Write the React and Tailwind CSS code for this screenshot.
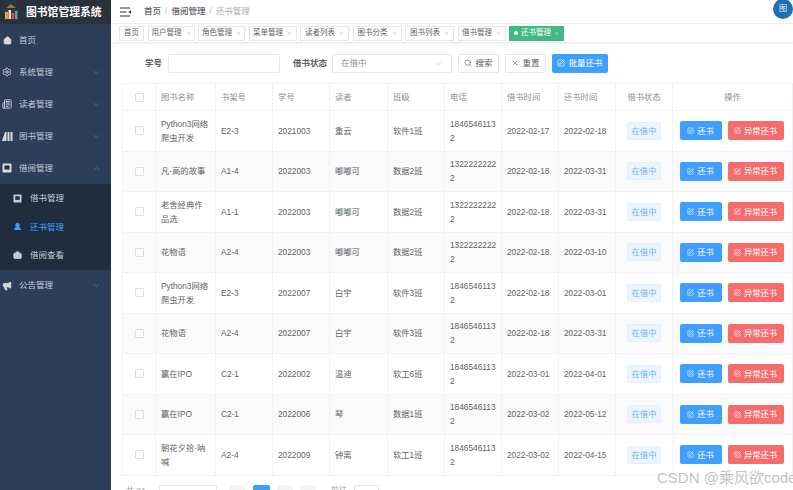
import {
  House,
  Settings,
  Newspaper,
  ChevronDown,
  ChevronUp,
  UserRound,
  Briefcase,
  Megaphone,
  Search,
  X,
  SquarePen,
} from 'lucide-react';

const tags = [
  { name: '首页', w: 'w-[25px]' },
  { name: '用户管理', close: true, w: 'w-[47px]' },
  { name: '角色管理', close: true, w: 'w-[47px]' },
  { name: '菜单管理', close: true, w: 'w-[48px]' },
  { name: '读者列表', close: true, w: 'w-[49px]' },
  { name: '图书分类', close: true, w: 'w-[49px]' },
  { name: '图书列表', close: true, w: 'w-[49px]' },
  { name: '借书管理', close: true, w: 'w-[48px]' },
];

const rows = [
  ['Python3网络爬虫开发', 'E2-3', '2021003', '重云', '软件1班', '18465461132', '2022-02-17', '2022-02-18'],
  ['凡·高的故事', 'A1-4', '2022003', '嘟嘟可', '数据2班', '13222222222', '2022-02-18', '2022-03-31'],
  ['老舍经典作品选', 'A1-1', '2022003', '嘟嘟可', '数据2班', '13222222222', '2022-02-18', '2022-03-31'],
  ['花物语', 'A2-4', '2022003', '嘟嘟可', '数据2班', '13222222222', '2022-02-18', '2022-03-10'],
  ['Python3网络爬虫开发', 'E2-3', '2022007', '白宇', '软件3班', '18465461132', '2022-02-18', '2022-03-01'],
  ['花物语', 'A2-4', '2022007', '白宇', '软件3班', '18465461132', '2022-02-18', '2022-03-31'],
  ['赢在IPO', 'C2-1', '2022002', '温迪', '软工6班', '18465461132', '2022-03-01', '2022-04-01'],
  ['赢在IPO', 'C2-1', '2022006', '琴', '数据1班', '18465461132', '2022-03-02', '2022-05-12'],
  ['朝花夕拾·呐喊', 'A2-4', '2022009', '钟离', '软工1班', '18465461132', '2022-03-02', '2022-04-15'],
];

const headers = ['图书名称', '书架号', '学号', '读者', '班级', '电话', '借书时间', '还书时间'];

function Logo() {
  return (
    <svg width="16" height="16" viewBox="0 0 16 16" className="shrink-0">
      <rect x="1" y="5" width="14" height="11" fill="#3d3a33" />
      <rect x="2" y="8" width="3" height="7" fill="#d9a441" />
      <rect x="5.5" y="6" width="2.5" height="9" fill="#e8e2cf" />
      <rect x="8.5" y="9" width="3" height="6" fill="#c9503f" />
      <rect x="12" y="7" width="2.5" height="8" fill="#4f9bb8" />
      <path d="M3 4 L8 0 L13 4 Z" fill="#8c7a55" />
    </svg>
  );
}

function CollapseIcon() {
  return (
    <svg width="11" height="10" viewBox="0 0 11 10" className="text-[#303133]">
      <path d="M0 1h10M0 5h6.5M0 9h10" stroke="currentColor" strokeWidth="1.2" fill="none" />
      <path d="M11 3.2 L8.2 5 L11 6.8 Z" fill="currentColor" />
    </svg>
  );
}

function ShelfIcon() {
  return (
    <svg width="11" height="10" viewBox="0 0 11 10">
      <path d="M0 10 L3 1 H4.5 V10 Z" fill="currentColor" />
      <rect x="5.5" y="1" width="2" height="9" fill="currentColor" />
      <rect x="8.5" y="1" width="2" height="9" fill="currentColor" />
    </svg>
  );
}

function BorrowIcon({ size = 10 }) {
  return (
    <svg width={size} height={size} viewBox="0 0 10 10">
      <rect x="0.5" y="0.5" width="9" height="9" rx="1" fill="currentColor" />
      <rect x="2.5" y="2.5" width="5" height="4" fill="#1f2d3f" />
    </svg>
  );
}

function MenuItem({ icon, label, open, arrow = true }) {
  return (
    <div className="h-8 flex items-center pr-[10px] text-[#bfcbd9]">
      <span className="w-[14px] flex justify-center text-[#d5dbe3]">{icon}</span>
      <span className="ml-[5px] flex-1">{label}</span>
      {arrow && (open ? <ChevronUp size={9} className="text-[#5f7189]" /> : <ChevronDown size={9} className="text-[#5f7189]" />)}
    </div>
  );
}

function SubItem({ icon, label, active }) {
  return (
    <div className={`h-[28.6px] flex items-center pl-[11px] ${active ? 'text-[#409eff]' : 'text-[#bfcbd9]'}`}>
      <span className="w-[12px] flex justify-center">{icon}</span>
      <span className="ml-[7px]">{label}</span>
    </div>
  );
}

function Sidebar() {
  return (
    <aside className="w-[111px] shrink-0 bg-[#2d3e58] text-[8.5px]">
      <div className="h-6 bg-[#2a303c] flex items-center pl-[3px] gap-[7px]">
        <Logo />
        <span className="text-white font-bold text-[10.8px] whitespace-nowrap">图书馆管理系统</span>
      </div>
      <MenuItem icon={<House size={9} fill="currentColor" />} label="首页" arrow={false} />
      <MenuItem icon={<Settings size={10} />} label="系统管理" />
      <MenuItem icon={<Newspaper size={10} />} label="读者管理" />
      <MenuItem icon={<ShelfIcon />} label="图书管理" />
      <MenuItem icon={<BorrowIcon />} label="借阅管理" open />
      <div className="bg-[#1f2d3f]">
        <SubItem icon={<BorrowIcon size={9} />} label="借书管理" />
        <SubItem icon={<UserRound size={9} fill="currentColor" />} label="还书管理" active />
        <SubItem icon={<Briefcase size={9} fill="currentColor" />} label="借阅查看" />
      </div>
      <MenuItem icon={<Megaphone size={10} fill="currentColor" />} label="公告管理" />
    </aside>
  );
}

function Toolbar() {
  return (
    <div className="h-[40px] flex items-center pl-[34px] text-[8.5px] text-[#606266] shrink-0">
      <span className="font-bold w-[17px] whitespace-nowrap">学号</span>
      <div className="ml-[6px] w-[112px] h-[19px] border border-[#e4e7ed] rounded-[2px]" />
      <span className="font-bold ml-[13px] w-[33px] whitespace-nowrap">借书状态</span>
      <div className="ml-[6px] w-[120px] h-[19px] border border-[#e4e7ed] rounded-[2px] flex items-center justify-between px-[8px] text-[#8a8d93]">
        在借中
        <ChevronDown size={9} className="text-[#c0c4cc]" />
      </div>
      <button className="ml-[6px] w-[41px] h-[19px] border border-[#e4e7ed] rounded-[2px] flex items-center justify-center gap-[3px]">
        <Search size={8} />
        搜索
      </button>
      <button className="ml-[6px] w-[41px] h-[19px] border border-[#e4e7ed] rounded-[2px] flex items-center justify-center gap-[3px]">
        <X size={8} />
        重置
      </button>
      <button className="ml-[6px] w-[56px] h-[19px] bg-[#409eff] text-white rounded-[2px] flex items-center justify-center gap-[3px]">
        <SquarePen size={8} />
        批量还书
      </button>
    </div>
  );
}

function DataTable() {
  return (
    <table className="ml-[11px] w-[670px] table-fixed border-collapse border border-[#f0f2f5] text-[8.3px] leading-[14px] text-[#606266]">
      <colgroup>
        <col className="w-[33px]" />
        <col className="w-[60px]" />
        <col className="w-[57px]" />
        <col className="w-[57px]" />
        <col className="w-[58px]" />
        <col className="w-[57px]" />
        <col className="w-[57px]" />
        <col className="w-[57px]" />
        <col className="w-[57px]" />
        <col className="w-[57px]" />
        <col className="w-[120px]" />
      </colgroup>
      <thead>
        <tr className="h-[27px] text-[#8b8e94]">
          <th className="border border-[#f0f2f5]">
            <span className="block w-[9px] h-[9px] mx-auto border border-[#dcdfe6] rounded-[1px]" />
          </th>
          {headers.map((h) => (
            <th key={h} className="border border-[#f0f2f5] px-[5px] text-left font-normal">{h}</th>
          ))}
          <th className="border border-[#f0f2f5] font-normal">借书状态</th>
          <th className="border border-[#f0f2f5] font-normal">操作</th>
        </tr>
      </thead>
      <tbody>
        {rows.map((row, i) => (
          <tr key={i} className={`h-[40.5px] ${i % 2 === 1 ? 'bg-[#fafafa]' : 'bg-white'}`}>
            <td className="border border-[#f0f2f5]">
              <span className="block w-[9px] h-[9px] mx-auto border border-[#dcdfe6] bg-white rounded-[1px]" />
            </td>
            {row.map((cell, j) =>
              j === 5 ? (
                <td key={j} className="border border-[#f0f2f5] px-[5px] whitespace-nowrap">
                  {cell.slice(0, 10)}
                  <br />
                  {cell.slice(10)}
                </td>
              ) : (
                <td key={j} className="border border-[#f0f2f5] px-[5px] break-all">{cell}</td>
              )
            )}
            <td className="border border-[#f0f2f5]">
              <span className="mx-auto flex items-center justify-center w-[34px] h-[18px] bg-[#ecf5ff] border border-[#e3f0fd] rounded-[2px] text-[#6fb3f5]">在借中</span>
            </td>
            <td className="border border-[#f0f2f5]">
              <div className="flex justify-center gap-[6px] pr-[2px]">
                <button className="w-[42px] h-[19px] bg-[#409eff] text-white rounded-[2px] flex items-center justify-center gap-[3px]">
                  <SquarePen size={7} />
                  还书
                </button>
                <button className="w-[56px] h-[19px] bg-[#f56c6c] text-white rounded-[2px] flex items-center justify-center gap-[3px]">
                  <SquarePen size={7} />
                  异常还书
                </button>
              </div>
            </td>
          </tr>
        ))}
      </tbody>
    </table>
  );
}

function Pagination() {
  return (
    <div className="mt-[9px] ml-[15px] h-4 flex items-start text-[8px] text-[#a0a3a8] gap-[7px]">
      <span className="w-[26px]">共 24 条</span>
      <span className="w-[58px] h-4 border border-[#e4e7ed] rounded-[2px]" />
      <span className="ml-[5px] w-[16px] h-4 bg-[#f4f4f5] rounded-[2px]" />
      <span className="ml-[1px] w-[17px] h-4 bg-[#409eff] rounded-[2px]" />
      <span className="w-[16px] h-4 bg-[#f4f4f5] rounded-[2px]" />
      <span className="w-[16px] h-4 bg-[#f4f4f5] rounded-[2px]" />
      <span className="ml-[8px]">前往</span>
      <span className="w-[25px] h-4 border border-[#e4e7ed] rounded-[2px]" />
    </div>
  );
}

export default function App() {
  return (
    <div className="relative flex h-[490px] w-[793px] overflow-hidden bg-white font-['Liberation_Sans','Noto_Sans_CJK_SC',sans-serif]">
      <Sidebar />
      <main className="flex-1 min-w-0 flex flex-col">
        <div className="h-[23px] shrink-0 flex items-center pl-[9px] text-[8.5px] text-[#606266]">
          <CollapseIcon />
          <span className="ml-[13px] font-medium">首页</span>
          <span className="mx-[4px] text-[#c0c4cc]">/</span>
          <span className="font-medium">借阅管理</span>
          <span className="mx-[4px] text-[#c0c4cc]">/</span>
          <span className="text-[#a8abb2]">还书管理</span>
          <span className="ml-auto -mt-[6px] w-[20px] h-[20px] rounded-full bg-[#1f6fb2] text-[#dce9f5] flex items-center justify-center shrink-0">图</span>
        </div>
        <div className="h-[20px] shrink-0 flex items-center gap-[3.5px] pl-[8px] border-b border-t border-[#eceef2] shadow-[0_1px_2px_rgba(0,0,0,0.06)] text-[7.5px] text-[#606266]">
          {tags.map((t) => (
            <span key={t.name} className={`${t.w} h-[15px] border border-[#e4e7ed] flex items-center justify-center gap-[4px] whitespace-nowrap`}>
              {t.name}
              {t.close && <X size={5} className="text-[#a8abb2]" />}
            </span>
          ))}
          <span className="w-[55px] h-[15px] bg-[#42b983] text-white flex items-center justify-center gap-[3px] whitespace-nowrap">
            <span className="w-[4px] h-[4px] rounded-full bg-white" />
            还书管理
            <X size={5} />
          </span>
        </div>
        <Toolbar />
        <DataTable />
        <Pagination />
      </main>
      <span className="absolute left-[657px] bottom-[1px] text-[15px] text-[#a8a8a8]/70 whitespace-nowrap">CSDN @乘风欲code</span>
    </div>
  );
}
